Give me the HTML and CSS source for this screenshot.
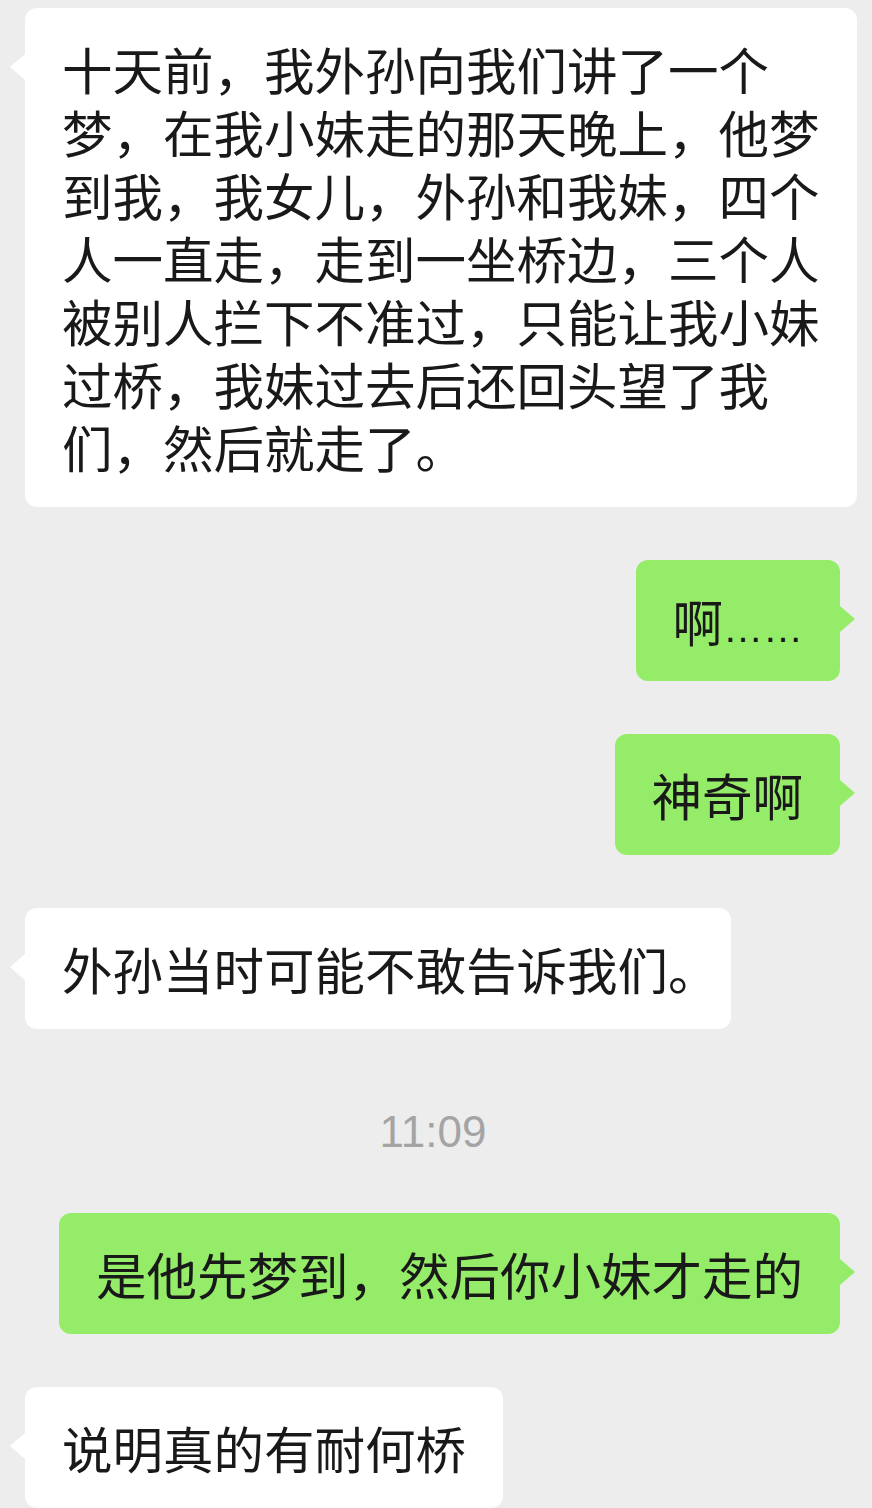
FILE: index.html
```html
<!DOCTYPE html>
<html lang="zh-CN">
<head>
  <meta charset="UTF-8" />
  <meta name="viewport" content="width=device-width, initial-scale=1.0">
  <title>聊天记录</title>
  <link rel="stylesheet" href="styles.css">
</head>
<body>

  <div class="chat">

    <!-- 对方的长消息 -->
    <div class="row left">
      <div class="bubble">十天前，我外孙向我们讲了一个<br>梦，在我小妹走的那天晚上，他梦<br>到我，我女儿，外孙和我妹，四个<br>人一直走，走到一坐桥边，三个人<br>被别人拦下不准过，只能让我小妹<br>过桥，我妹过去后还回头望了我<br>们，然后就走了。</div>
    </div>

    <div class="row right">
      <div class="bubble">啊<span class="dots">……</span></div>
    </div>

    <div class="row right">
      <div class="bubble">神奇啊</div>
    </div>

    <div class="row left">
      <div class="bubble">外孙当时可能不敢告诉我们<span class="trim">。</span></div>
    </div>

    <div class="time">11:09</div>

    <div class="row right">
      <div class="bubble">是他先梦到，然后你小妹才走的</div>
    </div>

    <div class="row left">
      <div class="bubble">说明真的有耐何桥</div>
    </div>

  </div>

</body>
</html>
```

FILE: styles.css
```css
body {
  margin: 0;
  background: #ededed;
  font-family: "Noto Sans CJK SC", "Noto Sans", sans-serif;
  color: #191919;
  height: 1508px;
  overflow: hidden;
}

.chat {
  display: flex;
  flex-direction: column;
  gap: 53px;
  padding-top: 8px;
}

.row {
  display: flex;
}

.row.left {
  justify-content: flex-start;
  padding-left: 25px;
}

.row.right {
  justify-content: flex-end;
  padding-right: 32px;
}

.bubble {
  position: relative;
  max-width: 833px;
  box-sizing: border-box;
  padding: 29px 37px;
  font-size: 50.5px;
  line-height: 63px;
  border-radius: 12px;
  white-space: nowrap;
}

.left .bubble {
  background: #ffffff;
}

.right .bubble {
  background: #95ec69;
}

/* 气泡小尖角 */
.bubble::before {
  content: "";
  position: absolute;
  top: 46px;
  border-top: 13px solid transparent;
  border-bottom: 13px solid transparent;
}

.left .bubble::before {
  left: -15px;
  border-right: 15px solid #ffffff;
}

.right .bubble::before {
  right: -15px;
  border-left: 15px solid #95ec69;
}

.dots {
  font-family: "Liberation Sans", sans-serif;
  font-size: 40px;
  line-height: 1;
}

/* 行尾句号只占半格 */
.trim {
  letter-spacing: -25px;
}

.time {
  text-align: center;
  font-family: "Liberation Sans", "Noto Sans", sans-serif;
  font-size: 44px;
  line-height: 56px;
  padding-top: 22px;
  color: #a4a4a4;
  margin-left: -6px;
}
```
